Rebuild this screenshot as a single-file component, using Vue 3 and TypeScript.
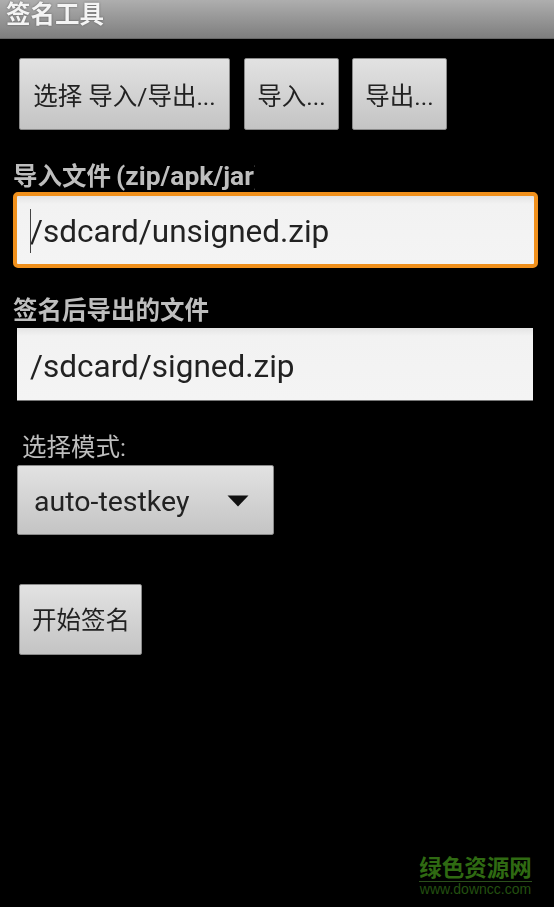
<script setup lang="ts">
const topButtons: { label: string; cls: string }[] = [
  { label: '选择 导入/导出...', cls: 'b-select' },
  { label: '导入...', cls: 'b-small' },
  { label: '导出...', cls: 'b-small' },
]
</script>

<template>
  <div class="screen">
    <header class="titlebar">签名工具</header>
    <main class="content">
      <div class="button-row">
        <button v-for="b in topButtons" :key="b.label" class="btn" :class="b.cls">{{ b.label }}</button>
      </div>
      <div class="label strong clip">导入文件 <span class="latin">(zip/apk/jar)</span></div>
      <div class="input focused"><span class="caret"></span>/sdcard/unsigned.zip</div>
      <div class="label strong second">签名后导出的文件</div>
      <div class="input plain">/sdcard/signed.zip</div>
      <div class="label mode">选择模式:</div>
      <div class="spinner">
        <span>auto-testkey</span>
        <svg class="arrow" width="22" height="12" viewBox="0 0 22 12"><path d="M0.5 0.5H21.5L11 11.5Z" fill="#111" /></svg>
      </div>
      <button class="btn start">开始签名</button>
    </main>
    <div class="watermark">
      <div class="wm-cn">绿色资源网</div>
      <div class="wm-en">www.downcc.com</div>
    </div>
  </div>
</template>

<style>
html, body { margin: 0; background: #000; }
</style>

<style scoped>
.screen {
  position: relative;
  width: 554px;
  height: 907px;
  overflow: hidden;
  background: #000;
  font-family: Roboto, "Noto Sans CJK SC", sans-serif;
}
.titlebar {
  box-sizing: border-box;
  height: 39px;
  padding-left: 6px;
  background: linear-gradient(#aeaeae, #7e7e7e);
  border-bottom: 1px solid #666;
  color: #f4f4f4;
  font-size: 24.5px;
  font-weight: 700;
  line-height: 30px;
  text-shadow: 0 0 2px #555;
  filter: blur(0.4px);
}
.content {
  display: flex;
  flex-direction: column;
  align-items: flex-start;
  filter: blur(0.4px);
}
.button-row {
  display: flex;
  gap: 14px;
  margin: 19px 0 0 19px;
}
.btn {
  box-sizing: border-box;
  height: 72px;
  padding: 0;
  border: 1px solid #8a8a8a;
  border-radius: 2px;
  background: linear-gradient(#e2e2e2, #c4c4c4);
  color: #222;
  font-family: inherit;
  font-size: 24.5px;
  white-space: nowrap;
}
.b-select { width: 211px; }
.b-small { width: 95px; }
.button-row .b-small + .b-small { margin-left: -1px; }
.label {
  color: #bebebe;
  font-size: 24.5px;
  line-height: 30px;
}
.strong { font-weight: 700; margin-left: 13px; }
.latin { font-size: 26.4px; margin-left: -1px; }
.clip {
  margin-top: 31px;
  width: 242px;
  height: 30px;
  overflow: hidden;
  white-space: nowrap;
}
.second { margin-top: 28px; }
.mode { margin: 32px 0 0 22px; }
.input {
  box-sizing: border-box;
  display: flex;
  align-items: center;
  background: linear-gradient(#e4e4e4 0, #f2f2f2 8px, #f4f4f4 100%);
  color: #222;
  font-size: 31.5px;
  white-space: nowrap;
}
.focused {
  position: relative;
  width: 525px;
  height: 76px;
  margin-top: 1px;
  margin-left: 13px;
  padding-top: 2px;
  border: 4px solid #f0901c;
  border-radius: 5px;
  padding-left: 13px;
}
.caret {
  position: absolute;
  left: 13px;
  top: 13px;
  width: 1px;
  height: 44px;
  background: #444;
}
.plain {
  width: 516px;
  height: 73px;
  margin-top: 2px;
  margin-left: 17px;
  padding-top: 5px;
  padding-left: 13px;
  border-bottom: 1px solid #777;
}
.spinner {
  box-sizing: border-box;
  display: flex;
  align-items: center;
  justify-content: space-between;
  width: 257px;
  height: 70px;
  margin: 2px 0 0 17px;
  padding: 2px 24px 0 16px;
  border: 1px solid #8a8a8a;
  border-radius: 2px;
  background: linear-gradient(#e2e2e2, #c4c4c4);
  color: #222;
  font-size: 28.5px;
}
.arrow { margin-top: 0; }
.start {
  width: 123px;
  height: 71px;
  margin: 49px 0 0 19px;
  padding: 0 0 2px 1px;
}
.watermark {
  position: absolute;
  left: 419px;
  top: 856px;
  width: 113px;
  text-align: center;
  color: #2f6a12;
}
.wm-cn {
  font-size: 22.5px;
  font-weight: 700;
  line-height: 24px;
  border-bottom: 1px solid #2c4f1c;
  padding-bottom: 1px;
  white-space: nowrap;
}
.wm-en {
  font-family: "Liberation Sans", sans-serif;
  font-size: 14px;
  line-height: 15px;
  color: #234f10;
  white-space: nowrap;
}
</style>
